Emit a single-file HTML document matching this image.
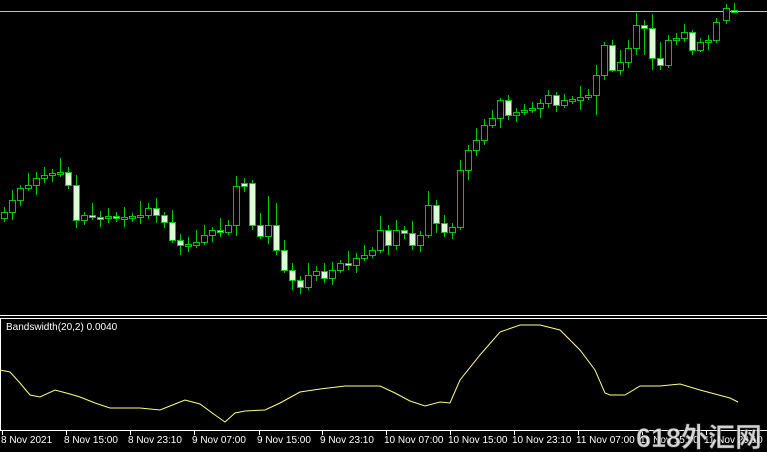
<!DOCTYPE html>
<html><head><meta charset="utf-8"><style>
html,body{margin:0;padding:0;background:#000;width:767px;height:452px;overflow:hidden}
svg{display:block}
.t{font-family:"Liberation Sans",sans-serif;font-size:10px;fill:#fff}
.wm{font-family:"Liberation Sans","Noto Sans CJK SC",sans-serif;font-size:27px;font-weight:bold;fill:#e8e8e8;stroke:#333;stroke-width:0.6;opacity:.9}
</style></head><body>
<svg width="767" height="452" xmlns="http://www.w3.org/2000/svg">
<rect width="767" height="452" fill="#000"/>
<line x1="0" y1="11.5" x2="767" y2="11.5" stroke="#c0c0c0"/>
<path fill="none" stroke="#00c800" d="M4.5 207V222M12.5 190V220M20.5 185V206M28.5 173V191M36.5 172V195M44.5 167V183M52.5 169V182M60.5 158V177M68.5 167V189M76.5 175V228M84.5 212V225M92.5 203V220M100.5 211V227M108.5 208V223M116.5 212V222M124.5 207V227M132.5 213V222M140.5 201V224M148.5 203V219M156.5 198V223M164.5 212V228M172.5 210V243M180.5 234V255M188.5 237V252M196.5 230V248M204.5 225V245M212.5 227V242M220.5 218V237M228.5 220V235M236.5 176V236M244.5 178V192M252.5 180V230M260.5 213V239M268.5 196V244M276.5 203V255M284.5 240V273M292.5 263V290M300.5 276V294M308.5 263V290M316.5 266V281M324.5 263V283M332.5 262V285M340.5 260V273M348.5 251V270M356.5 253V273M364.5 245V261M372.5 247V258M380.5 216V253M388.5 225V255M396.5 220V250M404.5 226V239M412.5 221V250M420.5 231V252M428.5 191V238M436.5 200V233M444.5 215V237M452.5 223V239M460.5 160V230M468.5 145V180M476.5 128V156M484.5 119V145M492.5 110V128M500.5 98V128M508.5 95V120M516.5 108V122M524.5 104V115M532.5 102V113M540.5 99V118M548.5 90V108M556.5 92V112M564.5 94V108M572.5 96V104M580.5 86V110M588.5 89V100M596.5 65V115M604.5 42V80M612.5 40V72M620.5 50V75M628.5 40V68M636.5 13V55M644.5 20V55M652.5 14V70M660.5 42V70M668.5 35V68M676.5 33V45M684.5 24V42M692.5 30V55M700.5 38V52M708.5 35V50M716.5 18V43M726.5 4V24M734.5 3V13"/>
<g stroke="#00c800" stroke-width="1">
<rect x="1.5" y="212.5" width="6" height="6" fill="#000"/>
<rect x="9.5" y="200.5" width="6" height="12" fill="#000"/>
<rect x="17.5" y="188.5" width="6" height="12" fill="#000"/>
<rect x="25.5" y="185.5" width="6" height="3" fill="#000"/>
<rect x="33.5" y="178.5" width="6" height="7" fill="#000"/>
<rect x="41.5" y="175.5" width="6" height="3" fill="#000"/>
<rect x="49.5" y="173.5" width="6" height="2" fill="#000"/>
<rect x="57.5" y="172.5" width="6" height="2" fill="#000"/>
<rect x="65.5" y="172.5" width="6" height="13" fill="#d8ffd8"/>
<rect x="73.5" y="185.5" width="6" height="35" fill="#d8ffd8"/>
<rect x="81.5" y="215.5" width="6" height="5" fill="#000"/>
<rect x="89.5" y="215.5" width="6" height="2" fill="#d8ffd8"/>
<rect x="97.5" y="217.5" width="6" height="2" fill="#d8ffd8"/>
<rect x="105.5" y="216.5" width="6" height="2" fill="#000"/>
<rect x="113.5" y="216.5" width="6" height="2" fill="#d8ffd8"/>
<rect x="121.5" y="217.5" width="6" height="2" fill="#000"/>
<rect x="129.5" y="216.5" width="6" height="2" fill="#000"/>
<rect x="137.5" y="215.5" width="6" height="2" fill="#000"/>
<rect x="145.5" y="208.5" width="6" height="7" fill="#000"/>
<rect x="153.5" y="208.5" width="6" height="7" fill="#d8ffd8"/>
<rect x="161.5" y="215.5" width="6" height="7" fill="#d8ffd8"/>
<rect x="169.5" y="222.5" width="6" height="18" fill="#d8ffd8"/>
<rect x="177.5" y="240.5" width="6" height="5" fill="#d8ffd8"/>
<rect x="185.5" y="244.5" width="6" height="2" fill="#000"/>
<rect x="193.5" y="242.5" width="6" height="3" fill="#000"/>
<rect x="201.5" y="235.5" width="6" height="7" fill="#000"/>
<rect x="209.5" y="230.5" width="6" height="5" fill="#000"/>
<rect x="217.5" y="230.5" width="6" height="2" fill="#d8ffd8"/>
<rect x="225.5" y="225.5" width="6" height="7" fill="#000"/>
<rect x="233.5" y="186.5" width="6" height="39" fill="#000"/>
<rect x="241.5" y="183.5" width="6" height="3" fill="#d8ffd8"/>
<rect x="249.5" y="183.5" width="6" height="42" fill="#d8ffd8"/>
<rect x="257.5" y="225.5" width="6" height="11" fill="#d8ffd8"/>
<rect x="265.5" y="225.5" width="6" height="11" fill="#000"/>
<rect x="273.5" y="225.5" width="6" height="25" fill="#d8ffd8"/>
<rect x="281.5" y="250.5" width="6" height="20" fill="#d8ffd8"/>
<rect x="289.5" y="270.5" width="6" height="10" fill="#d8ffd8"/>
<rect x="297.5" y="280.5" width="6" height="7" fill="#d8ffd8"/>
<rect x="305.5" y="275.5" width="6" height="12" fill="#000"/>
<rect x="313.5" y="271.5" width="6" height="4" fill="#000"/>
<rect x="321.5" y="271.5" width="6" height="7" fill="#d8ffd8"/>
<rect x="329.5" y="270.5" width="6" height="8" fill="#000"/>
<rect x="337.5" y="263.5" width="6" height="7" fill="#000"/>
<rect x="345.5" y="263.5" width="6" height="2" fill="#d8ffd8"/>
<rect x="353.5" y="258.5" width="6" height="7" fill="#000"/>
<rect x="361.5" y="255.5" width="6" height="3" fill="#000"/>
<rect x="369.5" y="250.5" width="6" height="5" fill="#000"/>
<rect x="377.5" y="230.5" width="6" height="20" fill="#000"/>
<rect x="385.5" y="230.5" width="6" height="15" fill="#d8ffd8"/>
<rect x="393.5" y="230.5" width="6" height="15" fill="#000"/>
<rect x="401.5" y="230.5" width="6" height="3" fill="#d8ffd8"/>
<rect x="409.5" y="233.5" width="6" height="12" fill="#d8ffd8"/>
<rect x="417.5" y="235.5" width="6" height="10" fill="#000"/>
<rect x="425.5" y="205.5" width="6" height="30" fill="#000"/>
<rect x="433.5" y="205.5" width="6" height="18" fill="#d8ffd8"/>
<rect x="441.5" y="223.5" width="6" height="9" fill="#d8ffd8"/>
<rect x="449.5" y="227.5" width="6" height="5" fill="#000"/>
<rect x="457.5" y="170.5" width="6" height="57" fill="#000"/>
<rect x="465.5" y="150.5" width="6" height="20" fill="#000"/>
<rect x="473.5" y="140.5" width="6" height="10" fill="#000"/>
<rect x="481.5" y="125.5" width="6" height="15" fill="#000"/>
<rect x="489.5" y="118.5" width="6" height="7" fill="#000"/>
<rect x="497.5" y="100.5" width="6" height="18" fill="#000"/>
<rect x="505.5" y="100.5" width="6" height="15" fill="#d8ffd8"/>
<rect x="513.5" y="112.5" width="6" height="3" fill="#000"/>
<rect x="521.5" y="110.5" width="6" height="2" fill="#000"/>
<rect x="529.5" y="108.5" width="6" height="2" fill="#000"/>
<rect x="537.5" y="103.5" width="6" height="5" fill="#000"/>
<rect x="545.5" y="95.5" width="6" height="8" fill="#000"/>
<rect x="553.5" y="95.5" width="6" height="10" fill="#d8ffd8"/>
<rect x="561.5" y="100.5" width="6" height="5" fill="#000"/>
<rect x="569.5" y="99.5" width="6" height="2" fill="#000"/>
<rect x="577.5" y="97.5" width="6" height="3" fill="#000"/>
<rect x="585.5" y="95.5" width="6" height="2" fill="#000"/>
<rect x="593.5" y="75.5" width="6" height="20" fill="#000"/>
<rect x="601.5" y="45.5" width="6" height="30" fill="#000"/>
<rect x="609.5" y="45.5" width="6" height="25" fill="#d8ffd8"/>
<rect x="617.5" y="62.5" width="6" height="8" fill="#000"/>
<rect x="625.5" y="48.5" width="6" height="14" fill="#000"/>
<rect x="633.5" y="25.5" width="6" height="23" fill="#000"/>
<rect x="641.5" y="25.5" width="6" height="3" fill="#d8ffd8"/>
<rect x="649.5" y="28.5" width="6" height="30" fill="#d8ffd8"/>
<rect x="657.5" y="58.5" width="6" height="7" fill="#d8ffd8"/>
<rect x="665.5" y="40.5" width="6" height="25" fill="#000"/>
<rect x="673.5" y="38.5" width="6" height="2" fill="#000"/>
<rect x="681.5" y="32.5" width="6" height="6" fill="#000"/>
<rect x="689.5" y="32.5" width="6" height="18" fill="#d8ffd8"/>
<rect x="697.5" y="42.5" width="6" height="8" fill="#000"/>
<rect x="705.5" y="40.5" width="6" height="2" fill="#000"/>
<rect x="713.5" y="22.5" width="6" height="18" fill="#000"/>
<rect x="723.5" y="8.5" width="6" height="12" fill="#000"/>
<rect x="731.5" y="10.5" width="6" height="2" fill="#d8ffd8"/>
</g>
<line x1="0" y1="315.5" x2="767" y2="315.5" stroke="#fff"/>
<line x1="0" y1="318.5" x2="767" y2="318.5" stroke="#fff"/>
<line x1="0.5" y1="318" x2="0.5" y2="431" stroke="#fff"/>
<line x1="0" y1="430.5" x2="767" y2="430.5" stroke="#fff"/>
<text class="t" x="6" y="330">Bandswidth(20,2) 0.0040</text>
<polyline fill="none" stroke="#ffff80" stroke-width="1" points="0,370 10,372 20,383 30,395 40,397 55,390 70,394 80,397 95,403 110,408 140,408 160,410 175,404 185,400 200,404 215,415 225,422 235,413 245,411 265,410 280,403 300,392 320,389 345,386 380,386 395,393 410,401 425,406 440,402 450,403 460,380 480,355 500,332 520,325 540,325 560,330 580,350 595,370 605,393 610,395 625,395 640,386 660,386 680,384 700,390 715,394 730,398 738,402"/>
<g stroke="#fff">
<line x1="2.5" y1="431" x2="2.5" y2="435"/><line x1="66.5" y1="431" x2="66.5" y2="435"/><line x1="130.5" y1="431" x2="130.5" y2="435"/><line x1="194.5" y1="431" x2="194.5" y2="435"/><line x1="259.5" y1="431" x2="259.5" y2="435"/><line x1="322.5" y1="431" x2="322.5" y2="435"/><line x1="386.5" y1="431" x2="386.5" y2="435"/><line x1="450.5" y1="431" x2="450.5" y2="435"/><line x1="514.5" y1="431" x2="514.5" y2="435"/><line x1="578.5" y1="431" x2="578.5" y2="435"/><line x1="642.5" y1="431" x2="642.5" y2="435"/><line x1="706.5" y1="431" x2="706.5" y2="435"/>
</g>
<text class="t" x="1" y="443">8 Nov 2021</text>
<text class="t" x="64" y="443">8 Nov 15:00</text>
<text class="t" x="128" y="443">8 Nov 23:10</text>
<text class="t" x="192" y="443">9 Nov 07:00</text>
<text class="t" x="257" y="443">9 Nov 15:00</text>
<text class="t" x="320" y="443">9 Nov 23:10</text>
<text class="t" x="384" y="443">10 Nov 07:00</text>
<text class="t" x="448" y="443">10 Nov 15:00</text>
<text class="t" x="512" y="443">10 Nov 23:10</text>
<text class="t" x="576" y="443">11 Nov 07:00</text>
<text class="t" x="640" y="443">11 Nov 15:00</text>
<text class="t" x="704" y="443">11 Nov 23:10</text>
<text class="wm" x="636" y="447">618外汇网</text>
</svg>
</body></html>
